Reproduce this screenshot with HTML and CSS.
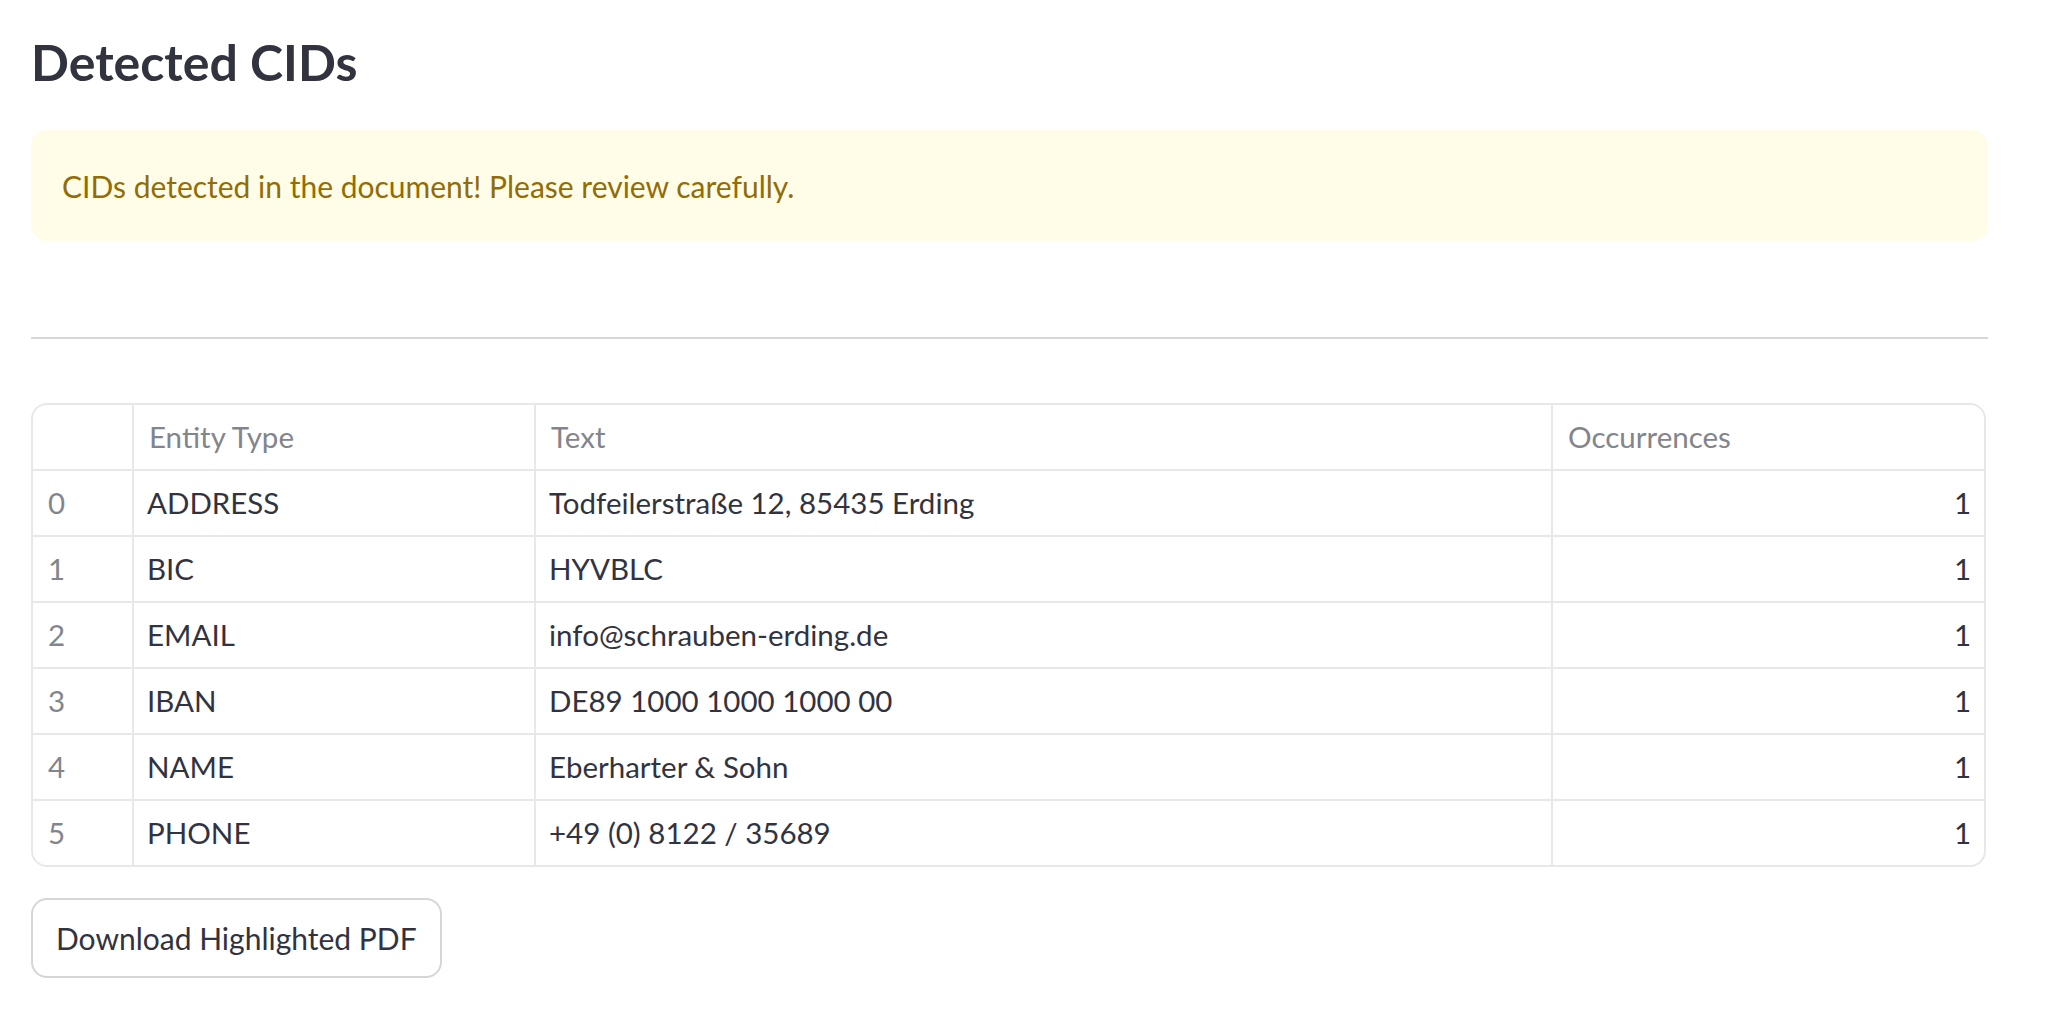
FILE: index.html
```html
<!DOCTYPE html>
<html lang="en">
<head>
<meta charset="utf-8">
<title>Detected CIDs</title>
<link rel="stylesheet" href="styles.css">
</head>
<body>
<main class="main">
  <h3 class="title">Detected CIDs</h3>
  <div class="alert">CIDs detected in the document! Please review carefully.</div>
  <hr class="divider">
  <div class="table-wrap">
    <table class="grid">
      <colgroup>
        <col class="c-idx"><col class="c-type"><col class="c-text"><col class="c-occ">
      </colgroup>
      <thead>
        <tr><th></th><th>Entity Type</th><th>Text</th><th>Occurrences</th></tr>
      </thead>
      <tbody>
        <tr><td class="idx">0</td><td>ADDRESS</td><td>Todfeilerstraße 12, 85435 Erding</td><td class="num">1</td></tr>
        <tr><td class="idx">1</td><td>BIC</td><td>HYVBLC</td><td class="num">1</td></tr>
        <tr><td class="idx">2</td><td>EMAIL</td><td>info@schrauben-erding.de</td><td class="num">1</td></tr>
        <tr><td class="idx">3</td><td>IBAN</td><td>DE89 1000 1000 1000 00</td><td class="num">1</td></tr>
        <tr><td class="idx">4</td><td>NAME</td><td>Eberharter &amp; Sohn</td><td class="num">1</td></tr>
        <tr><td class="idx">5</td><td>PHONE</td><td>+49 (0) 8122 / 35689</td><td class="num">1</td></tr>
      </tbody>
    </table>
  </div>
  <button class="btn" type="button">Download Highlighted PDF</button>
</main>
</body>
</html>
```
FILE: styles.css
```css
* { box-sizing: border-box; }

html, body {
  margin: 0;
  padding: 0;
  background: #ffffff;
}

body {
  font-family: Lato, "Liberation Sans", sans-serif;
  color: #31333f;
}

.main {
  width: 1957px;
  margin-left: 31px;
  padding-top: 30px;
  display: flex;
  flex-direction: column;
  align-items: flex-start;
}

.title {
  margin: 0;
  font-size: 50px;
  font-weight: 700;
  line-height: 64px;
  height: 64px;
  color: #31333f;
}

.alert {
  margin-top: 36px;
  width: 100%;
  height: 111px;
  display: flex;
  align-items: center;
  padding: 0 31px;
  background: #fffce7;
  color: #926c05;
  border-radius: 16px;
  font-size: 30px;
}

.divider {
  margin: 96px 0 0 0;
  width: 100%;
  height: 2px;
  border: 0;
  background: #d6d6d9;
}

.table-wrap {
  margin-top: 64px;
  width: 1955px;
  border: 2px solid #e8e8eb;
  border-radius: 16px;
  overflow: hidden;
}

.grid {
  width: 100%;
  border-collapse: separate;
  border-spacing: 0;
  table-layout: fixed;
  font-size: 29.5px;
}

.c-idx { width: 101px; }
.c-type { width: 402px; }
.c-text { width: 1017px; }
.c-occ { width: auto; }

.grid th,
.grid td {
  height: 66px;
  padding: 0 13px;
  line-height: 64px;
  text-align: left;
  white-space: nowrap;
  border-right: 2px solid #e8e8eb;
  border-bottom: 2px solid #e8e8eb;
}

.grid th {
  font-weight: 400;
  color: #83858c;
  padding-left: 15px;
}

.grid tr > :last-child { border-right: 0; }
.grid tbody tr:last-child td { border-bottom: 0; height: 64px; }

.grid td.idx { color: #83858c; padding-left: 15px; }
.grid td.num { text-align: right; padding-right: 13px; }

.btn {
  margin-top: 31px;
  height: 80px;
  padding: 0 23px;
  font-family: Lato, "Liberation Sans", sans-serif;
  font-size: 30px;
  color: #31333f;
  background: #ffffff;
  border: 2px solid #d6d6d9;
  border-radius: 16px;
}
```
